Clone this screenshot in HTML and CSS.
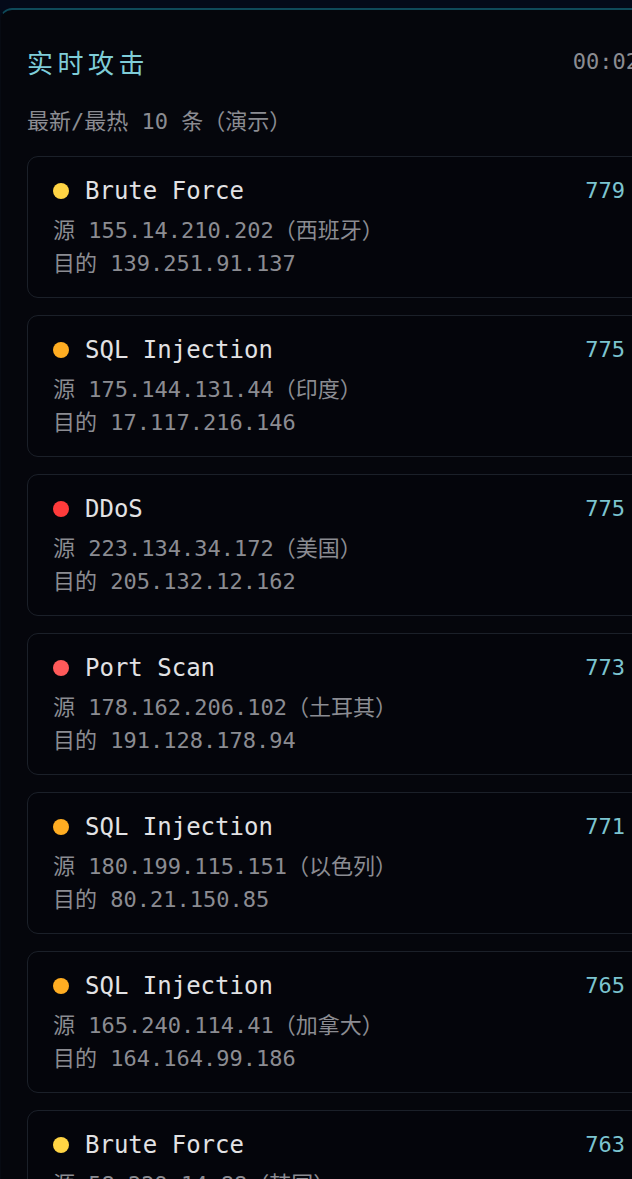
FILE: index.html
```html
<!DOCTYPE html>
<html lang="zh">
<head>
<meta charset="utf-8">
<title>实时攻击</title>
<link rel="stylesheet" href="styles.css">
</head>
<body>
<section class="panel">
  <header class="panel-head">
    <h2 class="panel-title">实时攻击</h2>
    <span class="panel-time">00:02</span>
  </header>
  <p class="panel-sub">最新/最热 10 条（演示）</p>
  <ul class="attack-list">
    <li class="attack">
      <div class="attack-top"><span class="dot dot-yellow"></span><span class="attack-name">Brute Force</span><span class="attack-count">779</span></div>
      <div class="attack-line">源 155.14.210.202（西班牙）</div>
      <div class="attack-line">目的 139.251.91.137</div>
    </li>
    <li class="attack">
      <div class="attack-top"><span class="dot dot-orange"></span><span class="attack-name">SQL Injection</span><span class="attack-count">775</span></div>
      <div class="attack-line">源 175.144.131.44（印度）</div>
      <div class="attack-line">目的 17.117.216.146</div>
    </li>
    <li class="attack">
      <div class="attack-top"><span class="dot dot-red"></span><span class="attack-name">DDoS</span><span class="attack-count">775</span></div>
      <div class="attack-line">源 223.134.34.172（美国）</div>
      <div class="attack-line">目的 205.132.12.162</div>
    </li>
    <li class="attack">
      <div class="attack-top"><span class="dot dot-coral"></span><span class="attack-name">Port Scan</span><span class="attack-count">773</span></div>
      <div class="attack-line">源 178.162.206.102（土耳其）</div>
      <div class="attack-line">目的 191.128.178.94</div>
    </li>
    <li class="attack">
      <div class="attack-top"><span class="dot dot-orange"></span><span class="attack-name">SQL Injection</span><span class="attack-count">771</span></div>
      <div class="attack-line">源 180.199.115.151（以色列）</div>
      <div class="attack-line">目的 80.21.150.85</div>
    </li>
    <li class="attack">
      <div class="attack-top"><span class="dot dot-orange"></span><span class="attack-name">SQL Injection</span><span class="attack-count">765</span></div>
      <div class="attack-line">源 165.240.114.41（加拿大）</div>
      <div class="attack-line">目的 164.164.99.186</div>
    </li>
    <li class="attack">
      <div class="attack-top"><span class="dot dot-yellow"></span><span class="attack-name">Brute Force</span><span class="attack-count">763</span></div>
      <div class="attack-line">源 58.229.14.88（韩国）</div>
      <div class="attack-line">目的 121.43.206.19</div>
    </li>
    <li class="attack">
      <div class="attack-top"><span class="dot dot-red"></span><span class="attack-name">DDoS</span><span class="attack-count">760</span></div>
      <div class="attack-line">源 94.102.61.7（荷兰）</div>
      <div class="attack-line">目的 47.96.210.33</div>
    </li>
  </ul>
</section>
</body>
</html>
```

FILE: styles.css
```css
html, body {
  margin: 0;
  padding: 0;
  overflow: hidden;
  background: #040a19;
}

body {
  width: 632px;
  height: 1179px;
  font-family: "DejaVu Sans Mono", "Noto Sans CJK SC", monospace;
}

.panel {
  box-sizing: border-box;
  width: 680px;
  margin-top: 8px;
  padding: 34px 26px 40px 26px;
  background: #05060c;
  border: 1px solid #0b1f29;
  border-left-color: #070a12;
  border-top: 2px solid #0f4a5a;
  border-radius: 12px 0 0 0;
}

.panel-head {
  display: flex;
  align-items: center;
  justify-content: space-between;
  height: 36px;
}

.panel-title {
  margin: 0;
  font-family: "Noto Sans CJK SC", sans-serif;
  font-weight: 400;
  font-size: 26px;
  line-height: 36px;
  letter-spacing: 4.5px;
  color: #7fcdd8;
}

.panel-time {
  margin-right: 14px;
  font-size: 22px;
  line-height: 36px;
  color: #8b8c92;
}

.panel-sub {
  margin: 27px 0 0 0;
  font-size: 22px;
  line-height: 30px;
  color: #8b8c92;
}

.attack-list {
  list-style: none;
  margin: 19px 0 0 0;
  padding: 0;
  display: flex;
  flex-direction: column;
  gap: 17px;
}

.attack {
  box-sizing: border-box;
  width: 624px;
  padding: 18px 25px 17px 25px;
  background: #04050b;
  border: 1px solid #1b2029;
  border-radius: 11px;
}

.attack-top {
  display: flex;
  align-items: center;
  height: 32px;
}

.dot {
  flex: none;
  width: 16px;
  height: 16px;
  border-radius: 50%;
  margin-right: 16px;
}

.dot-yellow { background: #ffd444; }
.dot-orange { background: #ffad22; }
.dot-red { background: #ff3b3b; }
.dot-coral { background: #ff5a5a; }

.attack-name {
  flex: 1;
  font-size: 24px;
  line-height: 32px;
  color: #e2e2e4;
}

.attack-count {
  font-size: 22px;
  line-height: 32px;
  color: #7cc4d0;
}

.attack-top + .attack-line {
  margin-top: 7px;
}

.attack-line {
  font-size: 22px;
  line-height: 33px;
  color: #8b8c92;
  white-space: nowrap;
}
```
